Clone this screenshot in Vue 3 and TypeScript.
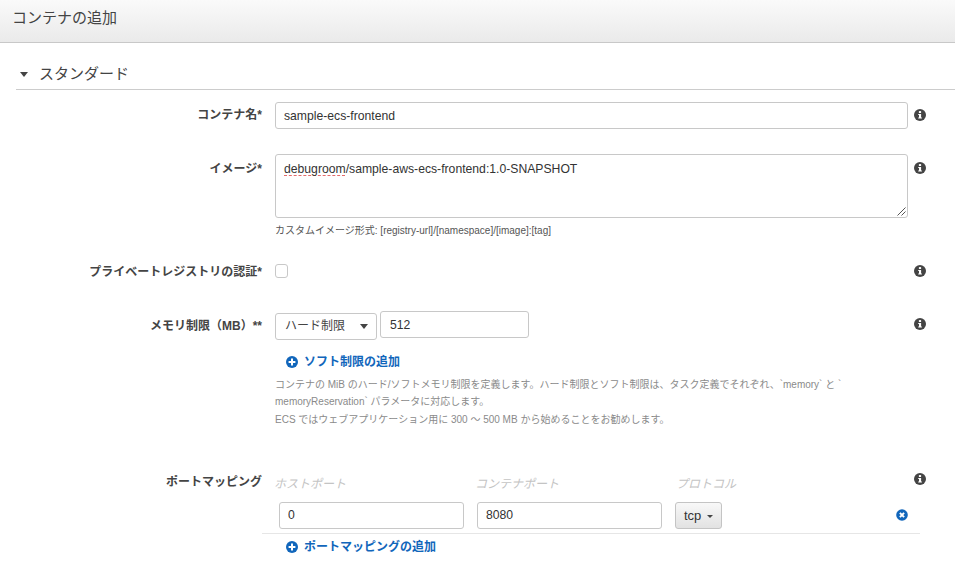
<script setup lang="ts">
const helpLines = [
  'コンテナの MiB のハード/ソフトメモリ制限を定義します。ハード制限とソフト制限は、タスク定義でそれぞれ、`memory` と `',
  'memoryReservation` パラメータに対応します。',
  'ECS ではウェブアプリケーション用に 300 〜 500 MB から始めることをお勧めします。',
]
const infoPath = 'M6 0a6 6 0 1 0 0 12A6 6 0 0 0 6 0z'
</script>

<template>
  <div class="page">
    <header class="top">コンテナの追加</header>

    <section class="section">
      <h2 class="section-head"><span class="caret-big"></span>スタンダード</h2>

      <div class="row row-name">
        <label class="label">コンテナ名*</label>
        <input class="input wide" value="sample-ecs-frontend" />
        <svg class="info" viewBox="0 0 12 12"><path :d="infoPath" fill="#444" /><rect x="4.9" y="2.1" width="2.2" height="1.9" fill="#fff" /><path d="M4.2 5h2.9v3.6h.8v1H4.2v-1H5V6h-.8z" fill="#fff" /></svg>
      </div>

      <div class="row row-image">
        <label class="label">イメージ*</label>
        <div class="stack">
          <div class="textarea"><span class="typo">debugroom</span>/sample-aws-ecs-frontend:1.0-SNAPSHOT
            <svg class="grip" viewBox="0 0 9 9"><path d="M0.5 8.5L8.5 .5M4.5 8.5L8.5 4.5" stroke="#555" stroke-width="1" fill="none" /></svg>
          </div>
          <p class="hint">カスタムイメージ形式: [registry-url]/[namespace]/[image]:[tag]</p>
        </div>
        <svg class="info" viewBox="0 0 12 12"><path :d="infoPath" fill="#444" /><rect x="4.9" y="2.1" width="2.2" height="1.9" fill="#fff" /><path d="M4.2 5h2.9v3.6h.8v1H4.2v-1H5V6h-.8z" fill="#fff" /></svg>
      </div>

      <div class="row row-auth">
        <label class="label">プライベートレジストリの認証*</label>
        <div><span class="checkbox"></span></div>
        <svg class="info" viewBox="0 0 12 12"><path :d="infoPath" fill="#444" /><rect x="4.9" y="2.1" width="2.2" height="1.9" fill="#fff" /><path d="M4.2 5h2.9v3.6h.8v1H4.2v-1H5V6h-.8z" fill="#fff" /></svg>
      </div>

      <div class="row row-mem">
        <label class="label">メモリ制限（MB）**</label>
        <div class="stack">
          <div class="mem-controls">
            <div class="select">ハード制限<span class="caret-sel"></span></div>
            <input class="input mem" value="512" />
          </div>
          <a class="add add-soft">
            <svg class="add-ic" viewBox="0 0 12 12"><circle cx="6" cy="6" r="6" fill="#1166bb" /><path d="M5 2.6h2V5h2.4v2H7v2.4H5V7H2.6V5H5z" fill="#fff" /></svg>ソフト制限の追加
          </a>
          <div class="help">
            <p v-for="line in helpLines" :key="line">{{ line }}</p>
          </div>
        </div>
        <svg class="info" viewBox="0 0 12 12"><path :d="infoPath" fill="#444" /><rect x="4.9" y="2.1" width="2.2" height="1.9" fill="#fff" /><path d="M4.2 5h2.9v3.6h.8v1H4.2v-1H5V6h-.8z" fill="#fff" /></svg>
      </div>

      <div class="row row-port">
        <label class="label">ポートマッピング</label>
        <div class="port-heads">
          <span class="ph ph1">ホストポート</span>
          <span class="ph ph2">コンテナポート</span>
          <span class="ph">プロトコル</span>
        </div>
        <svg class="info" viewBox="0 0 12 12"><path :d="infoPath" fill="#444" /><rect x="4.9" y="2.1" width="2.2" height="1.9" fill="#fff" /><path d="M4.2 5h2.9v3.6h.8v1H4.2v-1H5V6h-.8z" fill="#fff" /></svg>
      </div>

      <div class="port-row">
        <input class="input port" value="0" />
        <input class="input port" value="8080" />
        <button class="tcp">tcp<span class="caret-small"></span></button>
        <svg class="remove" viewBox="0 0 12 12"><circle cx="6" cy="6" r="5.8" fill="#1166bb" /><path d="M3.9 3.9l4.2 4.2M8.1 3.9L3.9 8.1" stroke="#fff" stroke-width="2" fill="none" /></svg>
      </div>
      <a class="add add-port">
        <svg class="add-ic" viewBox="0 0 12 12"><circle cx="6" cy="6" r="6" fill="#1166bb" /><path d="M5 2.6h2V5h2.4v2H7v2.4H5V7H2.6V5H5z" fill="#fff" /></svg>ポートマッピングの追加
      </a>
    </section>
  </div>
</template>

<style>
html, body {
  background: #fff;
  overflow: hidden;
}
</style>

<style scoped>
.page {
  width: 955px;
  height: 564px;
  overflow: hidden;
  font-family: "Liberation Sans", "Noto Sans CJK JP", sans-serif;
  font-size: 12px;
  color: #444;
}
.top {
  height: 42px;
  padding-left: 12px;
  line-height: 35px;
  font-size: 15px;
  color: #444;
  background: linear-gradient(#fafafa, #eaeaea);
  border-bottom: 1px solid #c8c8c8;
}
.section {
  padding-left: 16px;
}
.section-head {
  margin: 0;
  height: 47px;
  padding-top: 14px;
  box-sizing: border-box;
  line-height: 27px;
  font-size: 15px;
  font-weight: normal;
  color: #444;
  border-bottom: 1px solid #ccc;
  display: flex;
  align-items: center;
}
.caret-big {
  width: 0;
  height: 0;
  border-left: 4.5px solid transparent;
  border-right: 4.5px solid transparent;
  border-top: 5px solid #444;
  margin: 2px 11px 0 4px;
}
.row {
  display: grid;
  grid-template-columns: 246px 633px 12px;
  column-gap: 13px;
  align-items: start;
}
.row > .info {
  margin-left: -7px;
}
.row-name { margin-top: 12px; }
.row-image { margin-top: 25px; }
.row-auth { margin-top: 21px; }
.row-mem { margin-top: 26px; }
.row-port { margin-top: 43px; }
.label {
  text-align: right;
  font-weight: bold;
  font-size: 12px;
  line-height: 26px;
  color: #444;
}
.row-image .label {
  margin-top: 2px;
}
.row-mem .label {
  margin-top: 2px;
}
.input {
  box-sizing: border-box;
  height: 27px;
  border: 1px solid #c8c8c8;
  border-radius: 3px;
  padding: 0 8px;
  font: inherit;
  font-size: 12.2px;
  color: #333;
  background: #fff;
  outline: none;
}
.wide {
  width: 633px;
}
.info {
  width: 12px;
  height: 12px;
  margin-top: 7px;
}
.row-image .info {
  margin-top: 8px;
}
.stack {
  display: flex;
  flex-direction: column;
  align-items: flex-start;
}
.textarea {
  position: relative;
  box-sizing: border-box;
  width: 633px;
  height: 64px;
  border: 1px solid #c8c8c8;
  border-radius: 3px;
  padding: 7px 8px;
  font-size: 12.2px;
  line-height: 15px;
  color: #333;
}
.typo {
  text-decoration: underline dashed #e46a6a 1px;
  text-decoration-skip-ink: none;
  text-underline-offset: 2px;
}
.grip {
  position: absolute;
  right: 1px;
  bottom: 1px;
  width: 9px;
  height: 9px;
}
.hint {
  margin: 6px 0 0;
  font-size: 10px;
  line-height: 14px;
  color: #555;
}
.checkbox {
  display: block;
  width: 13px;
  height: 14px;
  box-sizing: border-box;
  margin-top: 5px;
  border: 1px solid #c8c8c8;
  border-radius: 3px;
}
.row-auth .info {
  margin-top: 6px;
}
.mem-controls {
  display: flex;
  align-items: flex-start;
  gap: 3px;
}
.select {
  box-sizing: border-box;
  width: 102px;
  height: 27px;
  margin-top: 2px;
  padding-left: 9px;
  border: 1px solid #c8c8c8;
  border-radius: 3px;
  line-height: 25px;
  font-size: 12px;
  position: relative;
}
.caret-sel {
  position: absolute;
  right: 8px;
  top: 10px;
  border-left: 4.5px solid transparent;
  border-right: 4.5px solid transparent;
  border-top: 5px solid #444;
}
.mem {
  width: 149px;
  padding-left: 9px;
}
.add {
  display: flex;
  align-items: center;
  font-weight: bold;
  font-size: 12px;
  line-height: 16px;
  color: #1166bb;
}
.add-ic {
  width: 12px;
  height: 12px;
  margin-right: 6px;
}
.add-soft {
  margin: 14px 0 0 11px;
}
.help {
  margin-top: 6px;
  font-size: 10px;
  line-height: 17.3px;
  color: #8a8a8a;
  white-space: nowrap;
}
.help p {
  margin: 0;
}
.port-heads {
  display: flex;
  padding-top: 3px;
  margin-left: -1px;
  font-size: 12px;
  font-style: italic;
  line-height: 20px;
  color: #c4c4c4;
}
.ph1 { width: 201px; }
.ph2 { width: 201px; }
.row-port .info {
  margin-top: 2px;
}
.row-port .label {
  line-height: 15px;
  margin-top: 4px;
}
.port-row {
  display: flex;
  align-items: flex-start;
  height: 31px;
  width: 641px;
  margin: 8px 0 0 246px;
  padding-left: 17px;
  border-bottom: 1px solid #e6e6e6;
}
.port {
  width: 185px;
  margin-right: 13px;
}
.tcp {
  box-sizing: border-box;
  width: 47px;
  height: 27px;
  padding: 0;
  padding-left: 8px;
  text-align: left;
  border: 1px solid #c4c4c4;
  border-radius: 3px;
  background: linear-gradient(#f8f8f8, #e2e2e2);
  font: inherit;
  font-size: 13px;
  color: #333;
}
.caret-small {
  display: inline-block;
  vertical-align: middle;
  margin-left: 6px;
  border-left: 3px solid transparent;
  border-right: 3px solid transparent;
  border-top: 3px solid #444;
}
.remove {
  width: 12px;
  height: 12px;
  margin-left: auto;
  margin-right: 12px;
  margin-top: 7px;
}
.add-port {
  margin: 5px 0 0 270px;
}
</style>
